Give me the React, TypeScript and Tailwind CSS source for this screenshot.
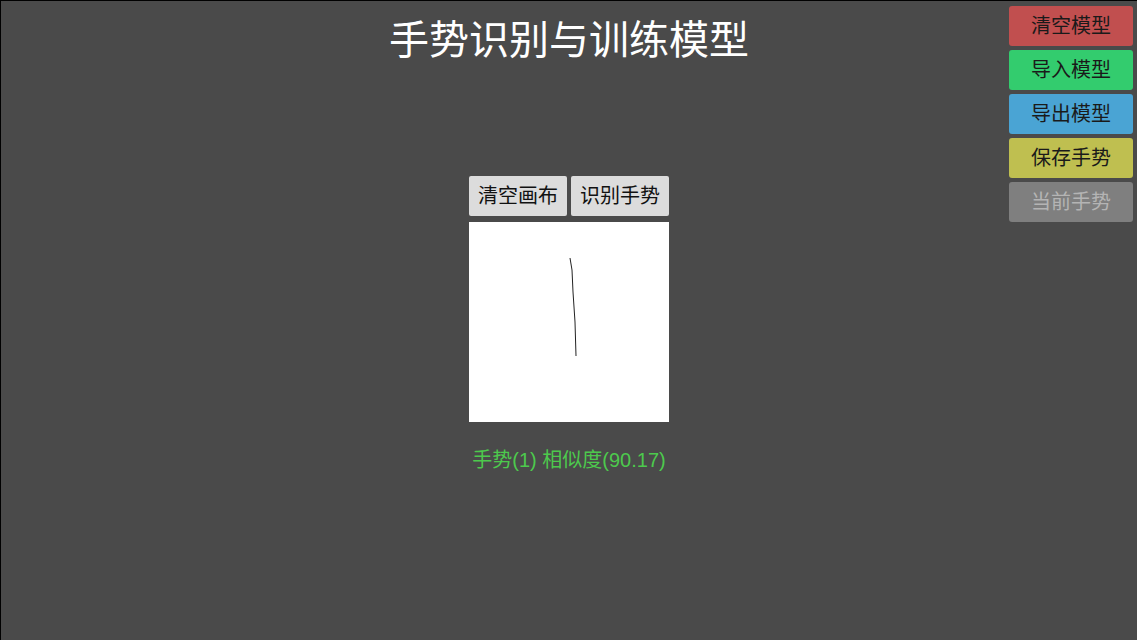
const FONT = "font-['Liberation_Sans','Noto_Sans_CJK_SC',sans-serif]"

const SIDE_BUTTONS = [
  { label: '清空模型', cls: 'bg-[#c14f4f] text-[#1a1a1a]' },
  { label: '导入模型', cls: 'bg-[#33cc6e] text-[#1a1a1a]' },
  { label: '导出模型', cls: 'bg-[#4aa4d4] text-[#1a1a1a]' },
  { label: '保存手势', cls: 'bg-[#bfbf50] text-[#1a1a1a]' },
  { label: '当前手势', cls: 'bg-[#7f7f7f] text-[#b4b4b4]' },
]

export default function App() {
  return (
    <div className={`relative w-[1137px] h-[640px] overflow-hidden bg-[#4a4a4a] border-t border-l border-black ${FONT}`}>
      {/* side toolbar */}
      <div className="absolute top-[5px] right-[4px] flex flex-col gap-[4px]">
        {SIDE_BUTTONS.map(b => (
          <button key={b.label} className={`w-[124px] h-[40px] rounded-[3px] text-[20px] leading-none ${b.cls}`}>
            {b.label}
          </button>
        ))}
      </div>

      <div className="flex flex-col items-center">
        <h1 className="mt-[14px] text-[40px] leading-[50px] text-white">手势识别与训练模型</h1>

        <div className="mt-[111px] flex gap-[4px]">
          <button className="w-[98px] h-[40px] rounded-[2px] bg-[#dcdcdc] text-[20px] text-[#111]">清空画布</button>
          <button className="w-[98px] h-[40px] rounded-[2px] bg-[#dcdcdc] text-[20px] text-[#111]">识别手势</button>
        </div>

        <div className="mt-[6px] w-[200px] h-[200px] bg-white">
          <svg width="200" height="200" viewBox="0 0 200 200">
            <path d="M101 36 L103 48 L104 70 L106 100 L107 134" stroke="#222" strokeWidth="1" fill="none" />
          </svg>
        </div>

        <p className="mt-[26px] text-[20px] leading-[24px] text-[#4dc94d]">手势(1) 相似度(90.17)</p>
      </div>
    </div>
  )
}
